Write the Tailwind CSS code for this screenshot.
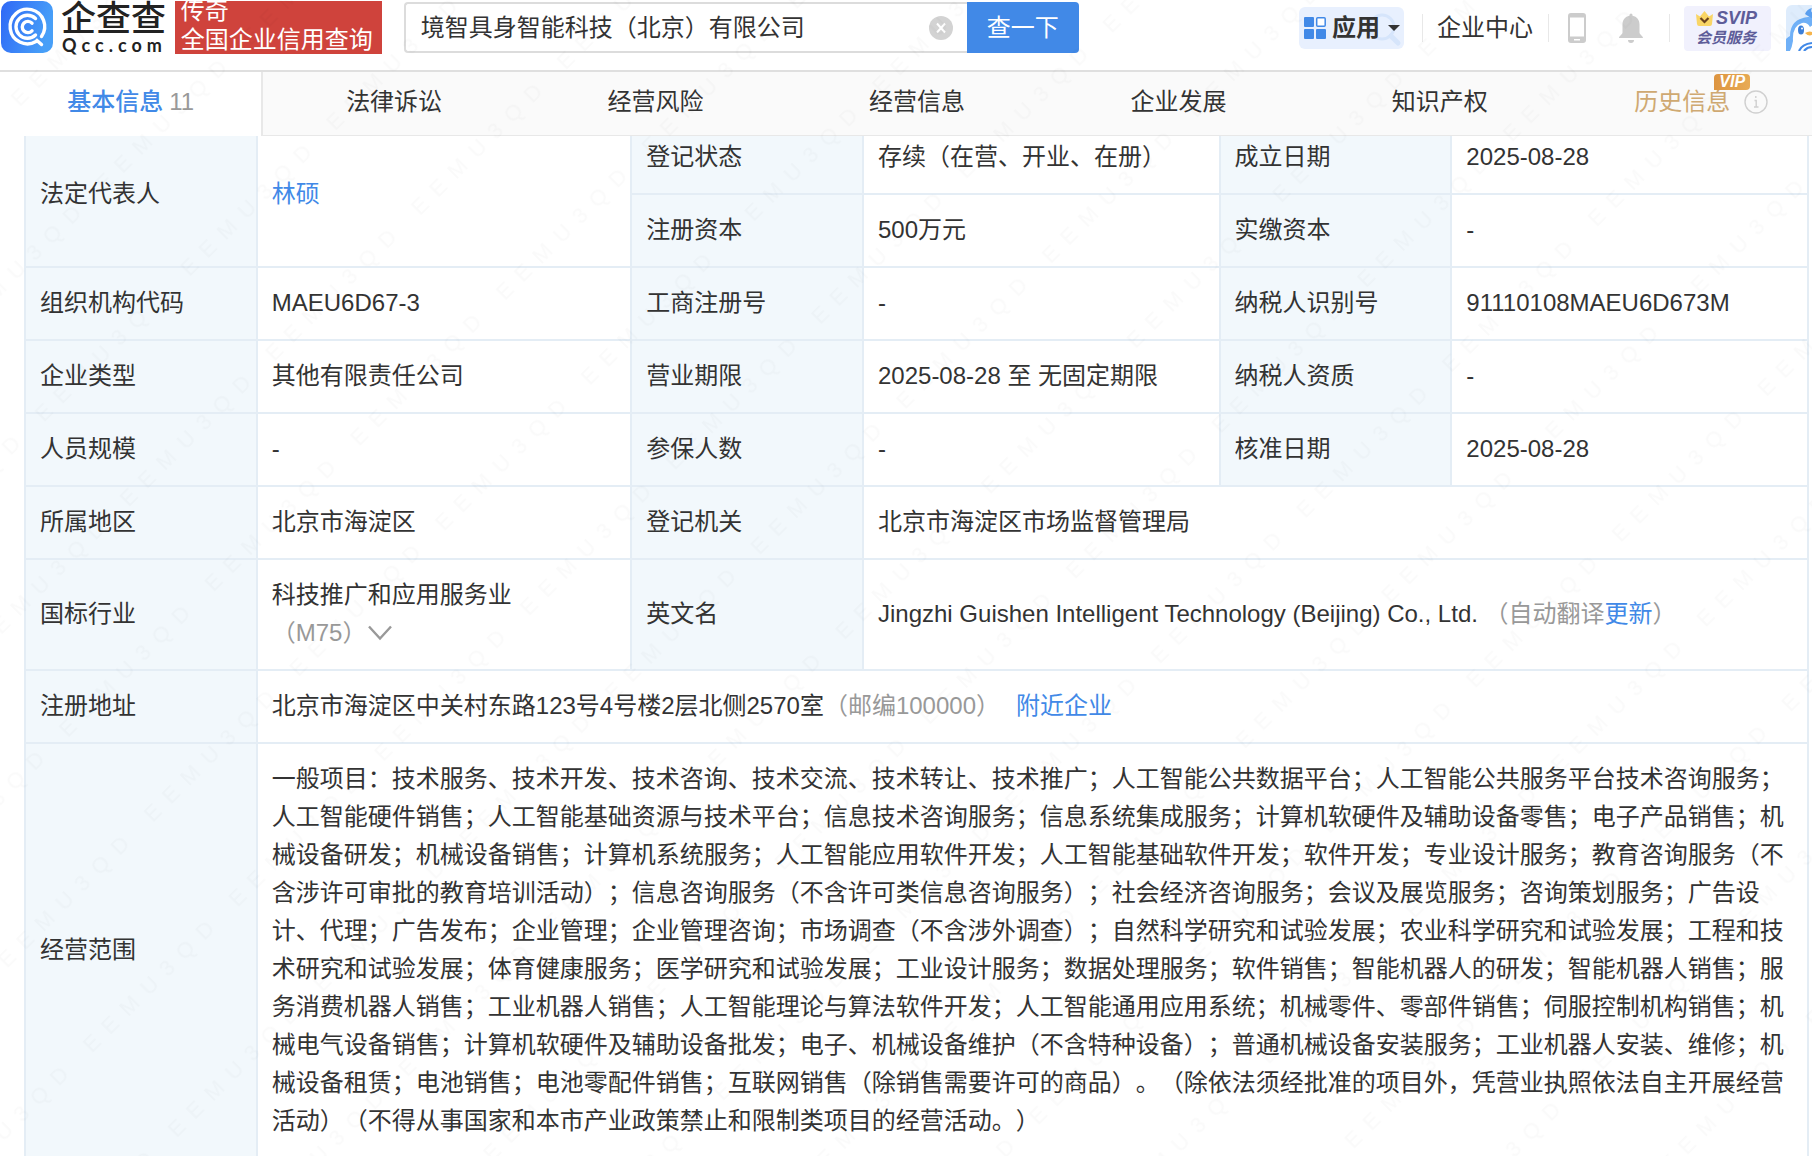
<!DOCTYPE html>
<html lang="zh-CN">
<head>
    <meta charset="UTF-8">
    <meta name="viewport" content="width=device-width, initial-scale=1.0">
    <title>境智具身智能科技（北京）有限公司 - 企查查</title>
    <script src="https://cdn.jsdelivr.net/npm/@tailwindcss/browser@4"></script>
    <style>
        body {
            font-family: 'Liberation Sans', 'Noto Sans CJK SC', sans-serif;
            text-spacing-trim: space-all;
        }
        .info-table th, .info-table td {
            border: 2px solid #e4edf5;
            padding: 16px 14px 17px;
            text-align: left;
            font-weight: 400;
        }
        .info-table th {
            background: #f2f8fc;
        }
    </style>
</head>
<body class="h-screen overflow-hidden bg-white text-2xl text-[#333]">

    <!-- Header -->
    <div class="relative z-10">
        <header class="flex h-[72px] items-start border-b-2 border-[#dfdfdf] bg-white pl-px">
            <a href="#" class="mt-px flex shrink-0 items-center" aria-label="企查查 Qcc.com">
                <svg class="size-[52px]" viewBox="0 0 52 52" fill="none">
                    <defs>
                        <linearGradient id="logo-bg" x1="0" y1="0" x2="1" y2="0.3">
                            <stop offset="0" stop-color="#2f68f6"/>
                            <stop offset="1" stop-color="#479ff8"/>
                        </linearGradient>
                    </defs>
                    <rect width="52" height="52" rx="10" fill="url(#logo-bg)"/>
                    <g stroke="#fff" stroke-width="3.4" stroke-linecap="round">
                        <path d="M40.5 35.5A17.3 17.3 0 1 0 35 40.500L36 39.500L40.500 43.500"/>
                        <path d="M34.500 17.500A11.500 11.500 0 1 0 34.500 34"/>
                        <path d="M31 22.200A5.600 5.600 0 1 0 31 29.800"/>
                    </g>
                </svg>
                <span class="ml-2 flex flex-col text-[#222]">
                    <span class="text-[35px] leading-9 font-medium">企查查</span>
                    <span class="pl-px font-['Lato'] text-lg leading-4 font-bold tracking-[5px]">Qcc.com</span>
                </span>
            </a>
            <div class="mt-px ml-2 flex h-[53px] w-[207px] shrink-0 flex-col justify-end overflow-hidden bg-[#cf433c] pl-1.5 leading-[29px] whitespace-nowrap text-white">
                <p>传奇</p>
                <p>全国企业信用查询</p>
            </div>

            <form class="mt-0.5 ml-[22px] flex h-[51px] w-[675px] shrink-0">
                <label for="keyword" class="sr-only">企业名称</label>
                <div class="flex flex-1 items-center rounded-l border-2 border-r-0 border-[#dcdcdc] bg-white pr-3.5 pl-[15px]">
                    <input id="keyword" type="text" value="境智具身智能科技（北京）有限公司" class="min-w-0 flex-1 outline-none">
                    <button type="button" aria-label="清除" class="size-6 rounded-full bg-[#d3d3d3]">
                        <svg viewBox="0 0 24 24" fill="none" stroke="#fff" stroke-width="2"><path d="M8 7.500l8 9M16 7.500l-8 9"/></svg>
                    </button>
                </div>
                <button type="submit" class="w-28 rounded-r bg-[#4189e7] text-white">查一下</button>
            </form>

            <nav class="mt-1 ml-auto flex h-12 shrink-0 items-center">
                <button type="button" class="relative flex h-[42px] w-[105px] items-center rounded-md bg-[#e8f0fe] pl-[5px] font-bold">
                    <svg class="absolute right-0.5 bottom-0.5 size-9" viewBox="0 0 36 36" fill="none" stroke="#d6e5fb" stroke-width="3"><circle cx="16" cy="16" r="12"/><path d="M25 25l7 7" stroke-width="5" stroke-linecap="round"/></svg>
                    <svg class="relative size-[22px]" viewBox="0 0 22 22" fill="#4189e7">
                        <rect width="10" height="10" rx="1"/>
                        <rect x="12.700" y="0.800" width="8.500" height="8.500" rx="1" fill="#fff" stroke="#4189e7" stroke-width="1.500"/>
                        <rect y="12" width="10" height="10" rx="1"/>
                        <rect x="12" y="12" width="10" height="10" rx="1"/>
                    </svg>
                    <span class="relative ml-1.5">应用</span>
                    <svg class="relative ml-2 h-1.5 w-3" viewBox="0 0 12 6"><path d="M0 0h12L6 6z" fill="#333"/></svg>
                </button>
                <span class="ml-[18px] h-7 w-px bg-[#e8e8e8]"></span>
                <a href="#" class="ml-3.5">企业中心</a>
                <span class="ml-[15px] h-7 w-px bg-[#e8e8e8]"></span>
                <a href="#" class="ml-[19px]" aria-label="手机版">
                    <svg class="h-[30px] w-[18px]" viewBox="0 0 18 30"><path fill="#ccc" fill-rule="evenodd" d="M3 0h12a3 3 0 0 1 3 3v24a3 3 0 0 1-3 3H3a3 3 0 0 1-3-3V3a3 3 0 0 1 3-3zM2 4.500v19h14v-19zM6 26v1.500h6V26z"/></svg>
                </a>
                <a href="#" class="ml-[33px]" aria-label="消息">
                    <svg class="h-[30px] w-6" viewBox="0 0 24 30" fill="#ccc"><path d="M10.500 2a1.500 1.500 0 0 1 3 0v.8c4.500.8 7 4.200 7 8.700v8c0 2 3.500 3.500 3.500 5.500H0c0-2 3.500-3.500 3.500-5.500v-8c0-4.500 2.500-7.900 7-8.700zM9 27h6a3 3 0 0 1-6 0z"/></svg>
                </a>
                <span class="ml-[26px] h-7 w-px bg-[#e8e8e8]"></span>
                <a href="#" class="ml-3.5 flex h-[45px] w-[87px] flex-col justify-center rounded bg-[#f1f1fd] pl-3 font-bold text-[#5e5d99] italic">
                    <span class="flex items-center gap-[3px] text-lg leading-5">
                        <svg class="h-[15px] w-[17px]" viewBox="0 0 17 15"><path d="M0 3l4 2.500L8.500 0 13 5.500 17 3l-1 10q-.2 2-2 2H3q-1.800 0-2-2z" fill="#f9d566"/><path d="M4.500 7l4 4 4-4" fill="none" stroke="#6b421f" stroke-width="2.200"/></svg>
                        SVIP
                    </span>
                    <span class="text-[15px] leading-5 whitespace-nowrap">会员服务</span>
                </a>
                <a href="#" class="ml-[15px] w-[26px] overflow-hidden" aria-label="客服">
                    <svg class="h-[46px] w-[46px]" viewBox="0 0 46 46">
                        <rect width="46" height="46" rx="6" fill="#deecfc"/>
                        <path d="M0 46V34q2-2 4-3 0-17 18-19 20 0 20 20v14z" fill="#6fb0f7"/>
                        <path d="M19 9q2-5 7-6-2 4 1 5 2-2 5-2-2 6-7 7z" fill="#5a9ff0"/>
                        <path d="M4 46q2-4 3-10-1-15 9-18 5-1 8 4 4-4 10-2 8 4 7 20v6z" fill="#fff"/>
                        <ellipse cx="15" cy="25" rx="3" ry="4.500" fill="#3b7fd9"/><circle cx="16" cy="23.500" r="1" fill="#fff"/>
                        <path d="M19 28q5-3 9 0-4 5-9 0z" fill="#f6b44b"/>
                        <path d="M13 46q3-7 13-8M18 46q3-4 8-4" fill="none" stroke="#4189e7" stroke-width="2.200"/>
                    </svg>
                </a>
            </nav>
        </header>

        <!-- Section tabs, the last one runs past the right edge -->
        <nav class="-mr-5 flex h-16 bg-white text-center">
            <a href="#" class="flex flex-1 items-center justify-center border-r-2 border-[#e8e8e8] bg-white pb-1"><b class="font-medium text-[#4189e7]">基本信息</b><span class="ml-1.5 text-[#999]">11</span></a>
            <a href="#" class="flex flex-1 items-center justify-center border-b border-[#e8e8e8] bg-[#fafafa] pb-1">法律诉讼</a>
            <a href="#" class="flex flex-1 items-center justify-center border-b border-[#e8e8e8] bg-[#fafafa] pb-1">经营风险</a>
            <a href="#" class="flex flex-1 items-center justify-center border-b border-[#e8e8e8] bg-[#fafafa] pb-1">经营信息</a>
            <a href="#" class="flex flex-1 items-center justify-center border-b border-[#e8e8e8] bg-[#fafafa] pb-1">企业发展</a>
            <a href="#" class="flex flex-1 items-center justify-center border-b border-[#e8e8e8] bg-[#fafafa] pb-1">知识产权</a>
            <a href="#" class="flex flex-1 items-center justify-center border-b border-[#e8e8e8] bg-[#fafafa] pb-1 text-[#cfa972]">
                <span class="relative">历史信息
                    <span class="absolute -top-3 -right-5 h-4 w-9 rounded-t rounded-br bg-linear-to-r from-[#dd9440] to-[#e8ab55] text-center text-base leading-4 font-bold text-white italic">VIP</span>
                </span>
                <svg class="ml-3.5 size-6" viewBox="0 0 24 24" fill="none" stroke="#d0d0d0" stroke-width="1.400"><circle cx="12" cy="12" r="11"/><path d="M10.500 10.500h1.700V17M10 17h4.500M11.800 6v2"/></svg>
            </a>
        </nav>
    </div>

    <!-- Registration details, scrolled slightly under the tabs -->
    <main class="-mt-4 mr-[3px] ml-6">
        <table class="info-table w-full table-fixed border-collapse leading-[38px]">
            <colgroup>
                <col class="w-[13%]">
                <col class="w-[21%]">
                <col class="w-[13%]">
                <col class="w-[20%]">
                <col class="w-[13%]">
                <col class="w-[20%]">
            </colgroup>
            <tbody>
                <tr>
                    <th scope="row" rowspan="2">法定代表人</th>
                    <td rowspan="2"><a href="#" class="text-[#4189e7]">林硕</a></td>
                    <th scope="row">登记状态</th>
                    <td>存续（在营、开业、在册）</td>
                    <th scope="row">成立日期</th>
                    <td>2025-08-28</td>
                </tr>
                <tr>
                    <th scope="row">注册资本</th>
                    <td>500万元</td>
                    <th scope="row">实缴资本</th>
                    <td>-</td>
                </tr>
                <tr>
                    <th scope="row">组织机构代码</th>
                    <td>MAEU6D67-3</td>
                    <th scope="row">工商注册号</th>
                    <td>-</td>
                    <th scope="row">纳税人识别号</th>
                    <td>91110108MAEU6D673M</td>
                </tr>
                <tr>
                    <th scope="row">企业类型</th>
                    <td>其他有限责任公司</td>
                    <th scope="row">营业期限</th>
                    <td>2025-08-28 至 无固定期限</td>
                    <th scope="row">纳税人资质</th>
                    <td>-</td>
                </tr>
                <tr>
                    <th scope="row">人员规模</th>
                    <td>-</td>
                    <th scope="row">参保人数</th>
                    <td>-</td>
                    <th scope="row">核准日期</th>
                    <td>2025-08-28</td>
                </tr>
                <tr>
                    <th scope="row">所属地区</th>
                    <td>北京市海淀区</td>
                    <th scope="row">登记机关</th>
                    <td colspan="3">北京市海淀区市场监督管理局</td>
                </tr>
                <tr>
                    <th scope="row">国标行业</th>
                    <td>
                        科技推广和应用服务业
                        <span class="flex items-center text-[#999]">（M75）
                            <svg class="ml-0.5 h-4 w-6" viewBox="0 0 24 16" fill="none" stroke="#999" stroke-width="2.400"><path d="M1 1.500l11 12 11-12"/></svg>
                        </span>
                    </td>
                    <th scope="row">英文名</th>
                    <td colspan="3">Jingzhi Guishen Intelligent Technology (Beijing) Co., Ltd. <span class="text-[#999]">（自动翻译<a href="#" class="text-[#4189e7]">更新</a>）</span></td>
                </tr>
                <tr>
                    <th scope="row">注册地址</th>
                    <td colspan="5">北京市海淀区中关村东路123号4号楼2层北侧2570室<span class="text-[#999]">（邮编100000）</span><a href="#" class="ml-4 text-[#4189e7]">附近企业</a></td>
                </tr>
                <tr>
                    <th scope="row">经营范围</th>
                    <td colspan="5">一般项目：技术服务、技术开发、技术咨询、技术交流、技术转让、技术推广；人工智能公共数据平台；人工智能公共服务平台技术咨询服务；人工智能硬件销售；人工智能基础资源与技术平台；信息技术咨询服务；信息系统集成服务；计算机软硬件及辅助设备零售；电子产品销售；机械设备研发；机械设备销售；计算机系统服务；人工智能应用软件开发；人工智能基础软件开发；软件开发；专业设计服务；教育咨询服务（不含涉许可审批的教育培训活动）；信息咨询服务（不含许可类信息咨询服务）；社会经济咨询服务；会议及展览服务；咨询策划服务；广告设计、代理；广告发布；企业管理；企业管理咨询；市场调查（不含涉外调查）；自然科学研究和试验发展；农业科学研究和试验发展；工程和技术研究和试验发展；体育健康服务；医学研究和试验发展；工业设计服务；数据处理服务；软件销售；智能机器人的研发；智能机器人销售；服务消费机器人销售；工业机器人销售；人工智能理论与算法软件开发；人工智能通用应用系统；机械零件、零部件销售；伺服控制机构销售；机械电气设备销售；计算机软硬件及辅助设备批发；电子、机械设备维护（不含特种设备）；普通机械设备安装服务；工业机器人安装、维修；机械设备租赁；电池销售；电池零配件销售；互联网销售（除销售需要许可的商品）。（除依法须经批准的项目外，凭营业执照依法自主开展经营活动）（不得从事国家和本市产业政策禁止和限制类项目的经营活动。）</td>
                </tr>
            </tbody>
        </table>
    </main>

    <!-- Watermark -->
    <svg class="pointer-events-none fixed inset-0 z-20 h-full w-full" aria-hidden="true">
        <defs>
            <pattern id="watermark" x="-70" y="20" width="206" height="120" patternUnits="userSpaceOnUse" patternTransform="rotate(-45)">
                <text x="8" y="70" font-size="22" letter-spacing="11" fill="#000" fill-opacity="0.018">EEMU3QD</text>
            </pattern>
        </defs>
        <rect width="100%" height="100%" fill="url(#watermark)"/>
    </svg>

</body>
</html>
